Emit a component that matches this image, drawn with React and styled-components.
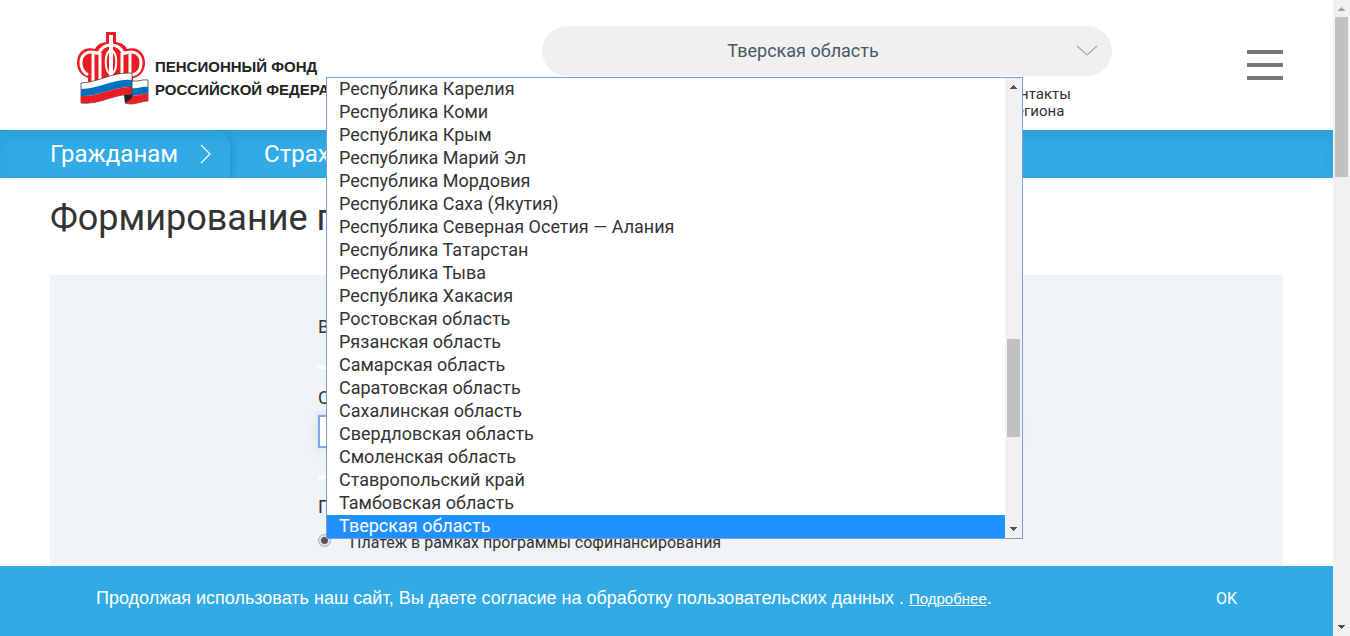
import React from 'react';
import styled, { createGlobalStyle } from 'styled-components';

const GlobalStyle = createGlobalStyle`
  * { box-sizing: border-box; }
  body {
    margin: 0;
    background: #fff;
    color: #333;
    font-family: Roboto, "Liberation Sans", sans-serif;
    overflow: hidden;
  }
`;

const Shell = styled.div`
  display: flex;
  height: 100vh;
`;

const Page = styled.div`
  flex: 1;
  min-width: 0;
  display: flex;
  flex-direction: column;
`;

const Content = styled.div`
  flex: 1;
  min-height: 0;
  display: flex;
  flex-direction: column;
  overflow: hidden;
`;

const Header = styled.header`
  display: flex;
  align-items: flex-start;
  height: 130px;
  flex-shrink: 0;
  padding: 0 50px 0 76px;
`;

const Logo = styled.a`
  display: flex;
  flex: 0 0 466px;
  padding-top: 32px;
  color: #222;
  text-decoration: none;
`;

const Emblem = styled.svg`
  width: 73px;
  height: 74px;
  margin-right: 6px;
`;

const LogoText = styled.span`
  padding-top: 23px;
  font: bold 15px/23px "Liberation Sans", Arial, sans-serif;
  white-space: nowrap;
`;

const RegionPicker = styled.div`
  position: relative;
  z-index: 2;
  flex: 1;
  min-width: 0;
  padding-top: 26px;
`;

const RegionField = styled.div`
  display: flex;
  align-items: center;
  height: 50px;
  padding-right: 14px;
  border-radius: 25px;
  background: #f0f0f0;
`;

const RegionSelect = styled.select`
  flex: 1;
  min-width: 0;
  height: 50px;
  padding: 0 12px 0 0;
  border: 0;
  background: transparent;
  appearance: none;
  color: #4a5866;
  font: 18px/24px Roboto, sans-serif;
  text-align: center;
  text-align-last: center;
  outline: none;
`;

const HeaderLinks = styled.nav`
  display: flex;
  justify-content: flex-end;
  padding: 10px 42px 0 0;
`;

const HeaderLink = styled.a`
  width: 68px;
  color: #333;
  font-size: 15px;
  line-height: 17px;
  text-align: center;
  text-decoration: none;
`;

const Popup = styled.div`
  position: absolute;
  top: 77px;
  right: 89px;
  display: flex;
  width: 697px;
  border: 1px solid #7b9ed9;
  background: #fff;
`;

const Options = styled.ul`
  flex: 1;
  margin: 0;
  padding: 0;
  list-style: none;
`;

const Option = styled.li`
  height: 23px;
  padding-left: 12px;
  font-size: 18px;
  line-height: 21px;
  color: ${(p) => (p.$active ? '#fff' : '#333')};
  background: ${(p) => (p.$active ? '#1e90ff' : 'transparent')};
`;

const Track = styled.div`
  display: flex;
  flex-direction: column;
  align-items: center;
  flex: 0 0 17px;
  background: #f1f1f1;
`;

const Arrow = styled.svg`
  width: 17px;
  height: 17px;
  flex-shrink: 0;
`;

const Space = styled.div`
  flex: ${(p) => p.$grow} 0 0;
`;

const Thumb = styled.div`
  width: 13px;
  flex: ${(p) => p.$grow} 0 0;
  background: #c1c1c1;
`;

const MenuButton = styled.button`
  display: flex;
  flex-direction: column;
  justify-content: space-between;
  width: 36px;
  height: 30px;
  margin: 50px 0 0 135px;
  padding: 0;
  border: 0;
  background: none;
`;

const MenuLine = styled.span`
  height: 4px;
  background: #777;
`;

const NavBar = styled.nav`
  display: flex;
  height: 48px;
  flex-shrink: 0;
  overflow: hidden;
  background: #31aae6;
  box-shadow: inset 0 8px 16px -4px rgba(0, 70, 130, 0.14);
`;

const NavLink = styled.a`
  display: flex;
  align-items: center;
  gap: 22px;
  padding: 0 18px 0 ${(p) => (p.$first ? 50 : 34)}px;
  border-top-right-radius: ${(p) => (p.$first ? 16 : 0)}px;
  box-shadow: ${(p) => (p.$first ? '3px 2px 6px rgba(0, 70, 130, 0.2)' : 'none')};
  color: #fff;
  font-size: 24px;
  line-height: 28px;
  text-decoration: none;
`;

const Title = styled.h1`
  margin: 0;
  padding: 18px 50px 0;
  font-size: 36px;
  font-weight: 400;
  line-height: 44px;
  white-space: nowrap;
`;

const Panel = styled.main`
  flex: 1;
  margin: 35px 50px 0;
  background: #f0f4f7;
`;

const Form = styled.form`
  max-width: 697px;
  margin: 0 auto;
  padding-top: 40px;
`;

const Field = styled.fieldset`
  margin: 0;
  padding: 0 0 ${(p) => p.$space || 0}px;
  border: 0;
  border-bottom: ${(p) => (p.$space ? '3px solid #fff' : '0')};
`;

const Label = styled.label`
  display: block;
  padding-top: ${(p) => p.$top || 0}px;
  font-size: 18px;
  line-height: 24px;
`;

const SubjectInput = styled.input`
  display: block;
  width: 100%;
  height: 33px;
  margin-top: 5px;
  border: 2px solid #7fa6e6;
  background: #fff;
  box-shadow: 0 0 10px rgba(90, 120, 170, 0.2);
  font: 18px Roboto, sans-serif;
`;

const RadioRow = styled.label`
  display: flex;
  gap: 19px;
  padding-top: 14px;
  font-size: 16px;
  line-height: 20px;
`;

const Radio = styled.input`
  width: 13px;
  height: 13px;
  margin: 1px 0;
  border: 1px solid #aaa;
  border-radius: 50%;
  appearance: none;
  background: radial-gradient(circle, #555 0 3px, #e0e0e0 4px);
`;

const Consent = styled.aside`
  position: relative;
  z-index: 3;
  display: flex;
  justify-content: space-between;
  flex-shrink: 0;
  height: 70px;
  padding: 20px 96px 0;
  background: #31aae6;
  color: #fff;
  font: 18px/24px "Liberation Sans", Arial, sans-serif;
`;

const ConsentText = styled.p`
  margin: 0;
`;

const MoreLink = styled.a`
  color: #fff;
  font-size: 15px;
`;

const OkButton = styled.button`
  height: 26px;
  padding: 0;
  border: 0;
  background: none;
  color: #fff;
  font: 16px/26px Roboto, sans-serif;
`;

const regions = [
  'Республика Карелия',
  'Республика Коми',
  'Республика Крым',
  'Республика Марий Эл',
  'Республика Мордовия',
  'Республика Саха (Якутия)',
  'Республика Северная Осетия — Алания',
  'Республика Татарстан',
  'Республика Тыва',
  'Республика Хакасия',
  'Ростовская область',
  'Рязанская область',
  'Самарская область',
  'Саратовская область',
  'Сахалинская область',
  'Свердловская область',
  'Смоленская область',
  'Ставропольский край',
  'Тамбовская область',
  'Тверская область',
];
const current = 'Тверская область';

function Scrollbar({ before, thumb, after, atTop }) {
  return (
    <Track aria-hidden="true">
      <Arrow viewBox="0 0 17 17" shapeRendering="crispEdges">
        <path d="M5 11V10H6V9H7V8H8V7H9V8H10V9H11V10H12V11Z" fill={atTop ? '#a3a3a3' : '#505050'} />
      </Arrow>
      <Space $grow={before} />
      <Thumb $grow={thumb} />
      <Space $grow={after} />
      <Arrow viewBox="0 0 17 17" shapeRendering="crispEdges">
        <path d="M5 6V7H6V8H7V9H8V10H9V9H10V8H11V7H12V6Z" fill="#505050" />
      </Arrow>
    </Track>
  );
}

function PensionEmblem() {
  return (
    <Emblem viewBox="0 0 73 74" aria-hidden="true">
      <path
        d="M30 0H40V10C46 11 49 13 51 17C62 14 69 21 69 31C69 39 64 45 57 46V60H12V46C4 43 1 37 1 31C1 21 8 14 19 17C21 13 24 11 30 10Z"
        fill="#ed1c24"
      />
      <g fill="none" stroke="#fff" strokeWidth="3">
        <path d="M35 3V60" strokeWidth="4" />
        <path d="M12 43C7 40 5 36 5 31C5 22 12 18 20 21H23C25 16 29 13 35 13S45 16 47 21H50C58 18 65 22 65 31C65 38 62 42 56 43" />
        <path d="M17 21V52M24 21V52M46 21V52M54 21V52M20 21H25M45 21H50" />
        <path d="M35 18C28 20 28 40 35 42C42 40 42 20 35 18" strokeWidth="2" />
      </g>
      <path d="M5 51C24 50 35 40 56 41V62C38 62 23 73 5 71Z" fill="#fff" stroke="#444" strokeWidth="0.8" />
      <path d="M5 57C24 57 38 46 56 48V55C38 54 23 65 5 64Z" fill="#0071bc" />
      <path d="M5 64C23 65 38 54 56 55V62C38 62 23 73 5 71Z" fill="#ed1c24" />
      <path d="M56 49C62 50 66 47 72 48V69C64 69 58 74 49 71L56 62Z" fill="#fff" stroke="#444" strokeWidth="0.8" />
      <path d="M56 56C62 57 66 54 72 55V62C66 61 62 65 56 63Z" fill="#0071bc" />
      <path d="M56 63C62 65 66 61 72 62V69C64 69 58 74 49 71Z" fill="#ed1c24" />
      <path d="M48 63L57 62L55 67L49 71Z" fill="#222" />
    </Emblem>
  );
}

export default function App() {
  return (
    <Shell>
      <GlobalStyle />
      <Page>
        <Content>
          <Header>
            <Logo href="#home">
              <PensionEmblem />
              <LogoText>
                ПЕНСИОННЫЙ ФОНД
                <br />
                РОССИЙСКОЙ ФЕДЕРАЦИИ
              </LogoText>
            </Logo>
            <RegionPicker>
              <RegionField>
                <RegionSelect aria-label="Регион" defaultValue={current}>
                  {regions.map((r) => (
                    <option key={r}>{r}</option>
                  ))}
                </RegionSelect>
                <svg width="22" height="12" viewBox="0 0 22 12" fill="none" stroke="#aaa" aria-hidden="true">
                  <path d="M1 1L11 10L21 1" strokeWidth="1.3" />
                </svg>
              </RegionField>
              <HeaderLinks>
                <HeaderLink href="#contacts">Контакты региона</HeaderLink>
              </HeaderLinks>
              <Popup>
                <Options role="listbox" aria-label="Список регионов">
                  {regions.map((r) => (
                    <Option key={r} role="option" aria-selected={r === current} $active={r === current}>
                      {r}
                    </Option>
                  ))}
                </Options>
                <Scrollbar before={244} thumb={98} after={84} />
              </Popup>
            </RegionPicker>
            <MenuButton aria-label="Меню">
              <MenuLine />
              <MenuLine />
              <MenuLine />
            </MenuButton>
          </Header>
          <NavBar>
            <NavLink href="#citizens" $first>
              Гражданам
              <svg width="12" height="20" viewBox="0 0 12 20" fill="none" stroke="#fff" aria-hidden="true">
                <path d="M1 1L10 10L1 19" strokeWidth="1.2" />
              </svg>
            </NavLink>
            <NavLink href="#insurers">Страхователям</NavLink>
          </NavBar>
          <Title>Формирование платежа</Title>
          <Panel>
            <Form>
              <Field $space={27}>
                <Label as="div">Вид</Label>
              </Field>
              <Field $space={28}>
                <Label htmlFor="subject" $top={17}>
                  Субъект
                </Label>
                <SubjectInput id="subject" />
              </Field>
              <Field>
                <Label as="div" $top={16}>
                  Платеж
                </Label>
                <RadioRow>
                  <Radio type="radio" name="payment" defaultChecked />
                  Платеж в рамках программы софинансирования
                </RadioRow>
              </Field>
            </Form>
          </Panel>
        </Content>
        <Consent>
          <ConsentText>
            Продолжая использовать наш сайт, Вы даете согласие на обработку пользовательских данных .{' '}
            <MoreLink href="#more">Подробнее</MoreLink>.
          </ConsentText>
          <OkButton>OK</OkButton>
        </Consent>
      </Page>
      <Scrollbar before={0} thumb={160} after={442} atTop />
    </Shell>
  );
}
